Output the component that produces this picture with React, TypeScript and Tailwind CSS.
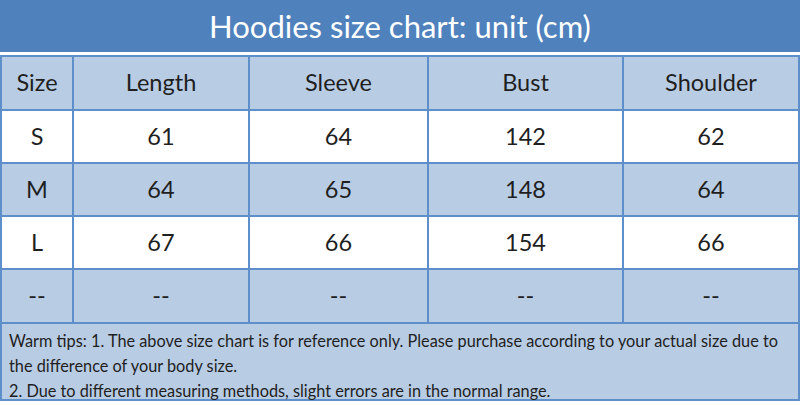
import React from "react"

const headers = ["Size", "Length", "Sleeve", "Bust", "Shoulder"]

const rows = [
  ["S", "61", "64", "142", "62"],
  ["M", "64", "65", "148", "64"],
  ["L", "67", "66", "154", "66"],
  ["--", "--", "--", "--", "--"],
]

export default function App() {
  return (
    <div className="w-[800px] h-[405px] bg-white overflow-hidden font-['Lato','Noto_Sans',sans-serif] text-[#1f1f1f]">
      {/* Title */}
      <div className="h-[52px] bg-[#4f81bd] flex items-center justify-center text-white text-[31px] leading-none">
        Hoodies size chart: unit (cm)
      </div>

      {/* Table */}
      <div className="mt-[3px] bg-[#5f8fcb] p-[2px] grid grid-cols-[70px_174px_177px_193px_174px] gap-[2px]">
        {headers.map((h) => (
          <div key={h} className="h-[52px] bg-[#b8cce4] flex items-center justify-center text-[23.5px]">
            {h}
          </div>
        ))}
        {rows.map((row, i) =>
          row.map((cell, j) => (
            <div
              key={`${i}-${j}`}
              className={`${i === 3 ? "h-[52px]" : "h-[51px]"} ${i % 2 === 0 && i !== 2 ? "bg-white" : ""} ${i === 2 ? "bg-white" : ""} ${i % 2 === 1 ? "bg-[#b8cce4]" : ""} flex items-center justify-center text-[23.5px]`}
            >
              {cell}
            </div>
          ))
        )}
        <div className="col-span-5 h-[75px] bg-[#b8cce4] pl-[7px] pr-[2px] pt-[4px] text-[16.3px] leading-[25px] whitespace-nowrap">
          Warm tips: 1. The above size chart is for reference only. Please purchase according to your actual size due to
          <br />
          the difference of your body size.
          <br />
          2. Due to different measuring methods, slight errors are in the normal range.
        </div>
      </div>
    </div>
  )
}
